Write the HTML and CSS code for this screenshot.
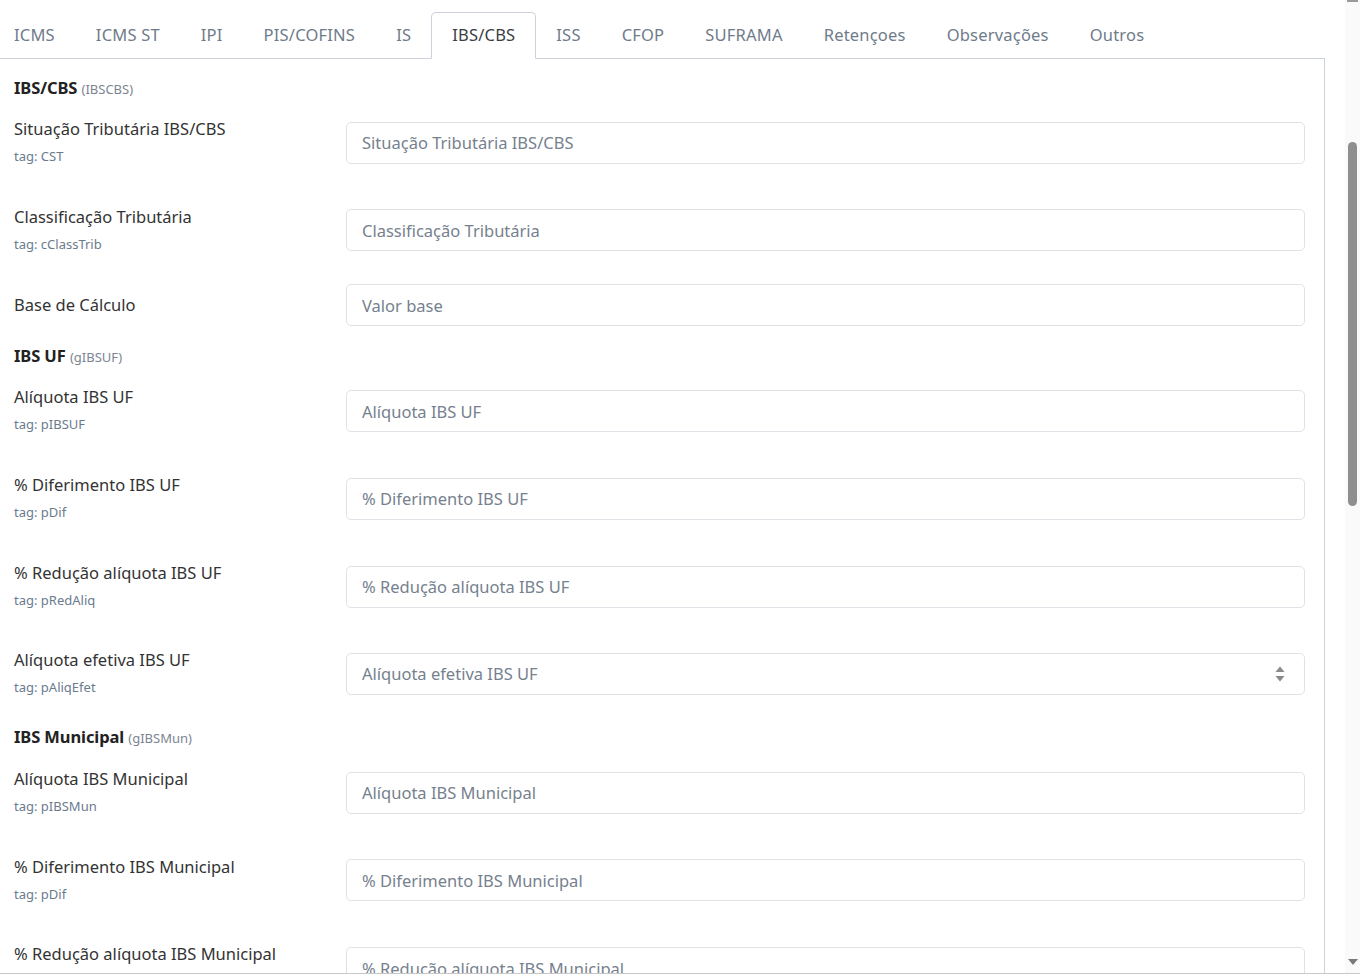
FILE: index.html
```html
<!DOCTYPE html>
<html lang="pt-BR">
<head>
    <meta charset="UTF-8">
    <meta name="viewport" content="width=device-width, initial-scale=1.0">
    <title>Tributos - IBS/CBS</title>
    <link rel="stylesheet" href="styles.css">
</head>
<body>
    <div class="viewport">
        <div class="page">
            <ul class="tabs">
                <li class="tab">ICMS</li>
                <li class="tab">ICMS ST</li>
                <li class="tab">IPI</li>
                <li class="tab">PIS/COFINS</li>
                <li class="tab">IS</li>
                <li class="tab active">IBS/CBS</li>
                <li class="tab">ISS</li>
                <li class="tab">CFOP</li>
                <li class="tab">SUFRAMA</li>
                <li class="tab">Retençoes</li>
                <li class="tab">Observações</li>
                <li class="tab">Outros</li>
            </ul>
            <div class="tab-content">
                <div class="section">
                    <h4 class="section-title">IBS/CBS <small>(IBSCBS)</small></h4>
                    <div class="field">
                        <div class="field-label tagged">
                            <label>Situação Tributária IBS/CBS</label>
                            <span class="tag">tag: CST</span>
                        </div>
                        <input class="input" type="text" placeholder="Situação Tributária IBS/CBS">
                    </div>
                    <div class="field">
                        <div class="field-label tagged">
                            <label>Classificação Tributária</label>
                            <span class="tag">tag: cClassTrib</span>
                        </div>
                        <input class="input" type="text" placeholder="Classificação Tributária">
                    </div>
                    <div class="field">
                        <div class="field-label">
                            <label>Base de Cálculo</label>
                        </div>
                        <input class="input" type="text" placeholder="Valor base">
                    </div>
                </div>

                <div class="section">
                    <h4 class="section-title">IBS UF <small>(gIBSUF)</small></h4>
                    <div class="field">
                        <div class="field-label tagged">
                            <label>Alíquota IBS UF</label>
                            <span class="tag">tag: pIBSUF</span>
                        </div>
                        <input class="input" type="text" placeholder="Alíquota IBS UF">
                    </div>
                    <div class="field">
                        <div class="field-label tagged">
                            <label>% Diferimento IBS UF</label>
                            <span class="tag">tag: pDif</span>
                        </div>
                        <input class="input" type="text" placeholder="% Diferimento IBS UF">
                    </div>
                    <div class="field">
                        <div class="field-label tagged">
                            <label>% Redução alíquota IBS UF</label>
                            <span class="tag">tag: pRedAliq</span>
                        </div>
                        <input class="input" type="text" placeholder="% Redução alíquota IBS UF">
                    </div>
                    <div class="field">
                        <div class="field-label tagged">
                            <label>Alíquota efetiva IBS UF</label>
                            <span class="tag">tag: pAliqEfet</span>
                        </div>
                        <div class="input number">
                            <input type="text" placeholder="Alíquota efetiva IBS UF">
                            <svg class="spin" width="12" height="22" viewBox="0 0 12 22">
                                <path d="M1.5 9 L6 3.5 L10.5 9 Z" fill="#8a8a8a"/>
                                <path d="M1.5 13 L6 18.5 L10.5 13 Z" fill="#8a8a8a"/>
                            </svg>
                        </div>
                    </div>
                </div>

                <div class="section">
                    <h4 class="section-title">IBS Municipal <small>(gIBSMun)</small></h4>
                    <div class="field">
                        <div class="field-label tagged">
                            <label>Alíquota IBS Municipal</label>
                            <span class="tag">tag: pIBSMun</span>
                        </div>
                        <input class="input" type="text" placeholder="Alíquota IBS Municipal">
                    </div>
                    <div class="field">
                        <div class="field-label tagged">
                            <label>% Diferimento IBS Municipal</label>
                            <span class="tag">tag: pDif</span>
                        </div>
                        <input class="input" type="text" placeholder="% Diferimento IBS Municipal">
                    </div>
                    <div class="field">
                        <div class="field-label tagged">
                            <label>% Redução alíquota IBS Municipal</label>
                            <span class="tag">tag: pRedAliq</span>
                        </div>
                        <input class="input" type="text" placeholder="% Redução alíquota IBS Municipal">
                    </div>
                </div>
            </div>
        </div>
        <div class="scrollbar">
            <div class="scroll-up"></div>
            <div class="thumb"></div>
            <div class="scroll-down"></div>
        </div>
    </div>
</body>
</html>
```

FILE: styles.css
```css
*{
    box-sizing: border-box;
}
html, body{
    margin: 0;
    padding: 0;
    background: #fff;
    font-family: "Noto Sans", Lato, sans-serif;
    font-size: 16.5px;
    color: #333;
}
.viewport{
    display: flex;
    height: 974px;
    border-bottom: 1px solid #c8c8c8;
    overflow: hidden;
}
.page{
    flex: 1;
    padding: 12px 20px 0 0;
    margin-left: -7px;
    overflow: hidden;
}
.tabs{
    display: flex;
    list-style: none;
    margin: 0;
    padding: 0;
    border-bottom: 1px solid #cdd2da;
}
.tab{
    padding: 10px 20px 11px;
    margin-right: -1px;
    margin-bottom: -1px;
    line-height: 24px;
    color: #6f7b8a;
    letter-spacing: 0.2px;
    border: 1px solid transparent;
    border-radius: 5px 5px 0 0;
    white-space: nowrap;
}
.tab.active{
    color: #3a3f45;
    background: #fff;
    border-color: #cdd2da #cdd2da #fff;
}
.tab-content{
    border: 1px solid #cdd2da;
    border-top: 0;
    padding: 17px 19px 0 20px;
}
.section-title{
    margin: 0 0 9.5px;
    font-size: 16.5px;
    line-height: 24px;
    font-weight: 700;
    color: #222;
    letter-spacing: -0.1px;
}
.section:first-child .section-title{
    margin-bottom: 9px;
}
.section-title small{
    font-size: 13px;
    line-height: 1;
    font-weight: 400;
    color: #7b8592;
    letter-spacing: 0;
}
.field{
    display: grid;
    grid-template-columns: 332px 1fr;
    align-items: center;
    margin-bottom: 20.2px;
}
.field:last-child{
    margin-bottom: 17.5px;
}
.field-label{
    display: flex;
    flex-direction: column;
}
.field-label.tagged{
    padding: 8px 0 10.5px;
}
.field-label label{
    line-height: 24px;
    color: #333;
}
.tag{
    font-size: 13px;
    line-height: 20px;
    color: #6b7b8e;
    margin-top: 5px;
}
.input{
    display: block;
    width: 100%;
    height: 42px;
    padding: 8px 15px;
    font: inherit;
    line-height: 24px;
    color: #333;
    background: #fff;
    border: 1px solid #dfe3e8;
    border-radius: 5px;
    outline: none;
}
.input::placeholder{
    color: #76818e;
}
.input.number{
    display: flex;
    align-items: center;
    padding-right: 18px;
}
.input.number input{
    flex: 1;
    border: 0;
    padding: 0;
    font: inherit;
    outline: none;
}
.input.number input::placeholder{
    color: #76818e;
}
.spin{
    display: block;
}
.scrollbar{
    width: 15px;
    background: #fafafa;
    display: flex;
    flex-direction: column;
    align-items: center;
}
.scroll-up{
    width: 11px;
    height: 2px;
    background: #9a9a9a;
}
.thumb{
    width: 9px;
    height: 364px;
    margin-top: 140px;
    background: #8f8f8f;
    border-radius: 5px;
}
.scroll-down{
    margin-top: auto;
    margin-bottom: 8px;
    width: 0;
    height: 0;
    border-left: 5px solid transparent;
    border-right: 5px solid transparent;
    border-top: 6px solid #7a7a7a;
}
```
